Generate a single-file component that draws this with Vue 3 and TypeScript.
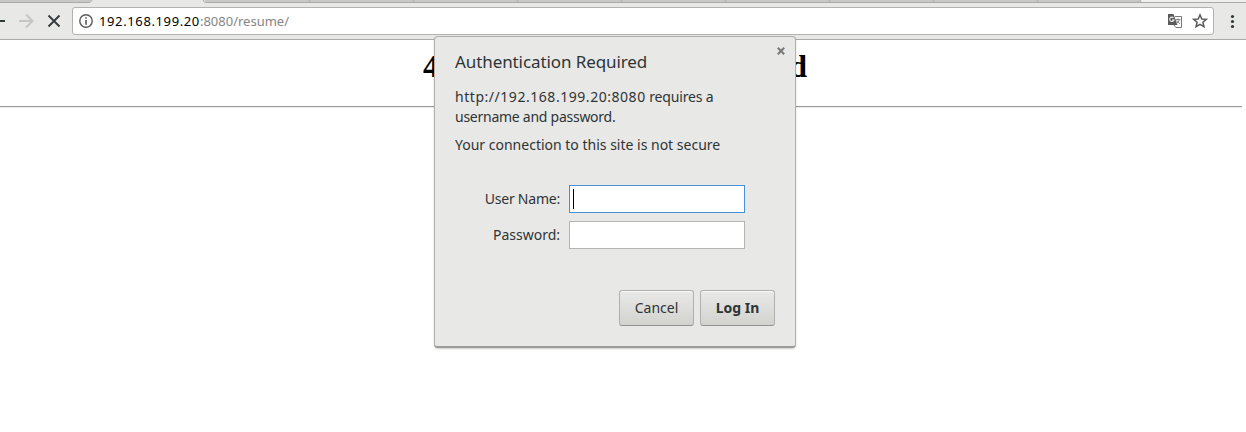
<script setup lang="ts">
import { ref } from 'vue'

const tabEdges: number[] = [309, 413, 517, 621, 725, 829, 933, 1037]
const host = ref('192.168.199.20')
const rest = ref(':8080/resume/')
</script>

<template>
  <div class="window">
    <header class="chrome">
      <svg class="tabs" width="1246" height="3" viewBox="0 0 1246 3">
        <rect width="1246" height="3" fill="#f0f0ef" />
        <path d="M0 0H92L90 2.5H0ZM204 0H1140L1141 2.5H206Z" fill="#c8c9c7" />
        <path d="M92 0H204L206 3H90Z" fill="#e8e8e6" />
        <path d="M0 2.5H89Q91 2.5 92 0M203 0Q204 2.5 206 2.5H1246M1140 0L1141 2" fill="none" stroke="#aaaba8" />
        <path v-for="x in tabEdges" :key="x" :d="`M${x} 0L${x + 1} 2`" stroke="#aaaba8" />
      </svg>
      <div class="toolbar">
        <svg class="nav" width="72" height="36" viewBox="0 3 72 36">
          <path d="M0 21H5" stroke="#30393b" stroke-width="2" />
          <path d="M19 21H32M26 14.5L32.5 21L26 27.5" fill="none" stroke="#c5c7c5" stroke-width="2" />
          <path d="M48.5 15.5L59.5 26.5M59.5 15.5L48.5 26.5" stroke="#30393b" stroke-width="1.8" />
        </svg>
        <div class="address">
          <svg class="info" width="14" height="14" viewBox="0 0 14 14">
            <circle cx="7" cy="7" r="6.2" fill="none" stroke="#5a5a5a" stroke-width="1.4" />
            <path d="M7 3.2V4.7M7 6V10.7" stroke="#5a5a5a" stroke-width="1.6" />
          </svg>
          <div class="url"><span class="host">{{ host }}</span>{{ rest }}</div>
          <svg class="tools" width="42" height="18" viewBox="1167 12 42 18">
            <path d="M1175 16.5H1181.5V27.5H1176L1173 24" fill="#fff" stroke="#777" />
            <path d="M1168 14H1173.5L1177.5 25H1168Z" fill="#5a5a5a" />
            <path d="M1173.5 17.8A2.2 2.2 0 1 0 1174 20H1172" fill="none" stroke="#eee" stroke-width="1.1" />
            <path d="M1175.5 19.5H1180.5M1178 18.5V19.5M1179.5 19.5Q1178.8 22 1176.5 23.5M1176.7 20.5L1180 24" fill="none" stroke="#777" stroke-width=".9" />
            <path d="M1200 14.8L1201.8 19L1206.3 19.3L1202.9 22.2L1204 26.7L1200 24.3L1196 26.7L1197.1 22.2L1193.7 19.3L1198.2 19Z" fill="none" stroke="#5a5a5a" stroke-width="1.5" />
          </svg>
        </div>
        <svg class="menu" width="32" height="36" viewBox="0 0 32 36">
          <circle v-for="y in [13.5, 18.5, 23.5]" :key="y" cx="18.5" :cy="y" r="1.6" fill="#30393b" />
        </svg>
      </div>
    </header>
    <main class="page">
      <h1><span>4</span><span>d</span></h1>
      <hr>
    </main>
    <section class="dialog" role="dialog">
      <svg class="close" width="8" height="8" viewBox="0 0 8 8"><path d="M.8.8L7.2 7.2M7.2.8L.8 7.2" stroke="#777978" stroke-width="2" /></svg>
      <h2>Authentication Required</h2>
      <p><span class="t-url">http://192.168.199.20:8080</span><span class="t-req"> requires a</span><br><span class="t-name">username and password.</span></p>
      <p class="warning">Your connection to this site is not secure</p>
      <form @submit.prevent>
        <label for="user" class="t-user">User Name:</label>
        <div id="user" class="field focused"><i class="caret"></i></div>
        <label for="password">Password:</label>
        <div id="password" class="field"></div>
      </form>
      <div class="actions">
        <button type="button">Cancel</button>
        <button type="button" class="primary">Log In</button>
      </div>
    </section>
  </div>
</template>

<style>
body { margin: 0; overflow: hidden; background: #fff; }
</style>

<style scoped>
* { box-sizing: border-box; }
.window { position: relative; width: 1246px; height: 432px; overflow: hidden; background: #fff; color: #2e3436; font-family: "Noto Sans", sans-serif; }
svg { display: block; flex: none; }
.chrome { height: 40px; background: #e8e8e6; border-bottom: 1px solid #aaaba8; }
.toolbar { display: flex; height: 36px; }
.address { display: flex; align-items: center; width: 1142px; height: 28px; margin-top: 4px; padding: 0 4px 0 6px; background: #fff; border: 1px solid #b2b3ae; border-radius: 3px; }
.url { margin-left: 6px; flex: 1; font-size: 13px; line-height: 18px; color: #858585; white-space: nowrap; }
.host { color: #000; letter-spacing: .62px; }
h1 { display: flex; justify-content: space-between; width: 384px; height: 37px; margin: 8px 0 0 423px; font: bold 32px/37px "Liberation Serif", serif; color: #000; }
hr { width: 1242px; height: 2px; margin: 21px 0 0; border: 0; border-top: 1px solid #999; background: #eee; }
.dialog { position: absolute; left: 434px; top: 36px; width: 362px; height: 312px; padding: 13px 20px 0; background: #e8e8e6; border: 1px solid #b1b2b0; border-bottom: 2px solid #9c9d9a; border-radius: 4px; box-shadow: 0 1px 2px #0003; }
.close { position: absolute; top: 10px; right: 10px; }
h2 { margin: 0; font-size: 17px; line-height: 24px; font-weight: 400; letter-spacing: -.09px; }
p { margin: 13px 0 0; font-size: 14px; line-height: 20px; white-space: nowrap; }
p.warning { margin-top: 8px; }
.t-url { letter-spacing: .54px; }
.t-req { letter-spacing: -.16px; }
.t-name { letter-spacing: -.26px; }
.t-user { letter-spacing: -.22px; }
form { display: grid; grid-template-columns: 105px 176px; column-gap: 9px; row-gap: 8px; margin-top: 30px; }
label { text-align: right; font-size: 14px; line-height: 28px; white-space: nowrap; }
.field { height: 28px; padding: 3px; background: #fff; border: 1px solid #b4b5b2; }
.focused { border-color: #4a90d9; }
.caret { display: block; width: 1px; height: 20px; background: #000; }
.actions { display: flex; justify-content: flex-end; gap: 6px; margin-top: 41px; }
button { width: 75px; height: 36px; padding: 0; border: 1px solid #b0b1ae; border-bottom-color: #929390; border-radius: 3px; background: linear-gradient(#e9e9e7, #d2d2cf); box-shadow: inset 0 1px #f8f8f7; color: #2e3436; font: 14px/20px "Noto Sans", sans-serif; white-space: nowrap; }
.primary { font-weight: 700; }
</style>
